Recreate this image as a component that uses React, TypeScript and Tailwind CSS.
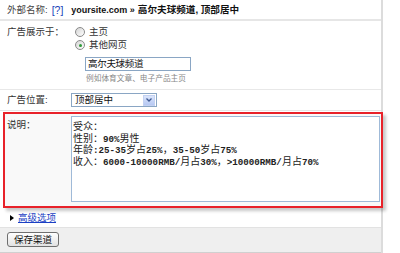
import React from "react";

const cjk = "font-['Liberation_Sans','Noto_Sans_CJK_SC',sans-serif]";

function Radio({ checked }: { checked?: boolean }) {
  return (
    <span className="relative inline-block w-[10px] h-[10px] rounded-full border border-[#8a8a8a] bg-gradient-to-br from-[#d4d4d4] to-white shrink-0">
      {checked && (
        <span className="absolute left-[2.5px] top-[2.5px] w-[3px] h-[3px] rounded-full bg-[#2f9a38]" />
      )}
    </span>
  );
}

function MixedLine({ text }: { text: string }) {
  const parts = text.match(/[\x00-\x7f]+|[^\x00-\x7f]+/g) || [];
  return (
    <div className="h-[11.5px] leading-[11.5px] whitespace-pre">
      {parts.map((p, i) =>
        /^[\x00-\x7f]+$/.test(p) ? (
          <span key={i} className="inline-block h-[11.5px] leading-[11.5px] font-['Liberation_Mono',monospace] text-[9.2px] font-semibold text-[#222]">
            {p}
          </span>
        ) : (
          <span key={i} className="inline-block h-[11.5px] leading-[11.5px] font-['Noto_Sans_CJK_SC',sans-serif] text-[10px]">
            {p}
          </span>
        )
      )}
    </div>
  );
}

const lines = [
  "受众：",
  "性别：90%男性",
  "年龄:25-35岁占25%，35-50岁占75%",
  "收入：6000-10000RMB/月占30%，>10000RMB/月占70%",
];

export default function App() {
  return (
    <div className={`w-[400px] h-[253px] bg-white overflow-hidden text-[#333] ${cjk}`}>
      <div className="w-[383px] h-[253px] border-r-2 border-[#dcdcdc] flex flex-col">
        {/* header */}
        <div className="h-[21px] border-b-2 border-[#e6e6e6] flex items-center pl-[7px] text-[9.5px] leading-[12px] shrink-0">
          <span className="text-[#444]">外部名称:</span>
          <span className="ml-[4px] text-[#1a3fb8] text-[10.5px] font-['Liberation_Sans',sans-serif]">[?]</span>
          <span className="ml-[8px] font-bold text-[#111] text-[9px]">yoursite.com »</span>
          <span className="ml-[3px] font-bold text-[#111] text-[9.6px]">高尔夫球频道, 顶部居中</span>
        </div>

        {/* 广告展示于 */}
        <div className="h-[69px] border-b border-[#e8e8e8] flex pl-[7px] pt-[5px] text-[9.5px] leading-[12px] shrink-0">
          <div className="w-[68px] shrink-0">广告展示于：</div>
          <div className="flex flex-col">
            <div className="flex items-center gap-[4px] h-[12px]">
              <Radio />
              <span>主页</span>
            </div>
            <div className="flex items-center gap-[4px] h-[12px] mt-[1px]">
              <Radio checked />
              <span>其他网页</span>
            </div>
            <div className="ml-[10px] mt-[6px] w-[106px] h-[14px] border border-[#8aa6c4] flex items-center pl-[2px] text-[9.5px] tracking-[-0.3px] text-[#111]">
              高尔夫球频道
            </div>
            <div className="ml-[11px] mt-[3px] text-[7.7px] leading-[10px] text-[#888]">
              例如体育文章、电子产品主页
            </div>
          </div>
        </div>

        {/* 广告位置 */}
        <div className="h-[21px] border-b border-[#e6e6e6] flex items-center pl-[7px] text-[9.5px] leading-[12px] shrink-0">
          <div className="w-[64px] shrink-0">广告位置:</div>
          <div className="w-[86px] h-[14px] border border-[#8aa6c4] flex items-center justify-between pl-[3px] pr-[1px] text-[#111]">
            <span>顶部居中</span>
            <span className="w-[12px] h-[11px] bg-gradient-to-b from-[#dbe5fb] to-[#b6c8f3] border border-[#c3d1f2] flex items-center justify-center">
              <svg width="6" height="4" viewBox="0 0 6 4">
                <path d="M0.5 0.5 L3 3 L5.5 0.5" stroke="#3f5a93" strokeWidth="1.3" fill="none" />
              </svg>
            </span>
          </div>
        </div>

        {/* 说明 (highlighted) */}
        <div className="mt-[1px] ml-[3px] w-[380px] h-[96px] border-2 border-[#e8222a] shadow-[3px_3px_3px_rgba(0,0,0,0.22)] bg-[#f9f9f9] flex pt-[2px] shrink-0 relative z-10">
          <div className="w-[66px] pl-[2px] pt-[3px] text-[9.5px] leading-[12px] shrink-0">说明：</div>
          <div className="w-[309px] h-[86px] border border-[#9fbad8] bg-white px-[1px] pt-[2px] text-[#222]">
            {lines.map((l, i) => (
              <MixedLine key={i} text={l} />
            ))}
          </div>
        </div>

        {/* 高级选项 */}
        <div className="h-[20px] border-b border-[#e2e2e2] flex items-center pl-[10px] text-[9.5px] leading-[12px] shrink-0">
          <span className="w-0 h-0 border-y-[3.5px] border-y-transparent border-l-[4px] border-l-black mr-[4px]" />
          <span className="text-[#1b3fc4] underline">高级选项</span>
        </div>

        {/* footer */}
        <div className="flex-1 bg-[#efefef] border-b border-[#d0d0d0] pl-[7px] pt-[4px]">
          <button className="w-[52px] h-[15px] rounded-[3px] border border-[#6f6f6f] bg-gradient-to-b from-white to-[#e2e2e2] text-[9.5px] leading-[12px] text-[#111] flex items-center justify-center">
            保存渠道
          </button>
        </div>
      </div>
    </div>
  );
}
